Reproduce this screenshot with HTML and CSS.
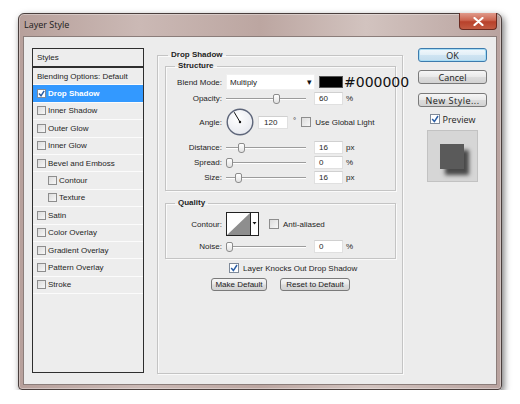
FILE: index.html
```html
<!DOCTYPE html>
<html>
<head>
	<meta charset="UTF-8">
	<title>Layer Style</title>
	<link rel="stylesheet" href="styles.css">
</head>
<body>
<div class="window">
	<div class="titlebar">
		<span class="title">Layer Style</span>
		<span class="close">
			<svg width="11" height="9" viewBox="0 0 11 9"><path d="M1.5 1 L9.5 8 M9.5 1 L1.5 8" stroke="#fff" stroke-width="2.2" stroke-linecap="round"/></svg>
		</span>
	</div>
	<div class="client">
		<div class="styles-list">
			<div class="list-head">Styles</div>
			<div class="item">Blending Options: Default</div>
			<div class="item selected"><span class="cb on"><svg width="7" height="7" viewBox="0 0 7 7"><path d="M1 3.5 L3 5.8 L6.2 0.8" fill="none" stroke="#2b5fa6" stroke-width="1.5"/></svg></span>Drop Shadow</div>
			<div class="item"><span class="cb"></span>Inner Shadow</div>
			<div class="item"><span class="cb"></span>Outer Glow</div>
			<div class="item"><span class="cb"></span>Inner Glow</div>
			<div class="item"><span class="cb"></span>Bevel and Emboss</div>
			<div class="item sub"><span class="cb"></span>Contour</div>
			<div class="item sub"><span class="cb"></span>Texture</div>
			<div class="item"><span class="cb"></span>Satin</div>
			<div class="item"><span class="cb"></span>Color Overlay</div>
			<div class="item"><span class="cb"></span>Gradient Overlay</div>
			<div class="item"><span class="cb"></span>Pattern Overlay</div>
			<div class="item"><span class="cb"></span>Stroke</div>
		</div>

		<fieldset class="group main-group">
			<legend>Drop Shadow</legend>
			<fieldset class="group structure">
				<legend>Structure</legend>
				<div class="row blend-row">
					<span class="lbl">Blend Mode:</span>
					<span class="select">Multiply<span class="arrow">&#9662;</span></span>
					<span class="swatch"></span>
					<span class="hex">#000000</span>
				</div>
				<div class="row opacity-row">
					<span class="lbl">Opacity:</span>
					<span class="slider"><span class="thumb" style="margin-left:47px"></span></span>
					<span class="field">60</span><span class="unit">%</span>
				</div>
				<div class="row angle-row">
					<span class="lbl">Angle:</span>
					<svg class="dial" width="28" height="28" viewBox="0 0 28 28">
						<defs><radialGradient id="dg" cx="0.4" cy="0.35" r="0.7"><stop offset="0" stop-color="#ffffff"/><stop offset="1" stop-color="#e6e8ee"/></radialGradient></defs>
						<circle cx="14" cy="14" r="12.8" fill="url(#dg)" stroke="#5d6579" stroke-width="1.4"/>
						<line x1="14" y1="14" x2="8.2" y2="4.2" stroke="#111" stroke-width="1"/>
						<circle cx="14" cy="14" r="1.2" fill="#111"/>
					</svg>
					<span class="field wide">120</span>
					<span class="deg">&deg;</span>
					<span class="cb big"></span>
					<span class="cb-text">Use Global Light</span>
				</div>
				<div class="row first-slider">
					<span class="lbl">Distance:</span>
					<span class="slider"><span class="thumb" style="margin-left:12px"></span></span>
					<span class="field">16</span><span class="unit">px</span>
				</div>
				<div class="row">
					<span class="lbl">Spread:</span>
					<span class="slider"><span class="thumb" style="margin-left:0"></span></span>
					<span class="field">0</span><span class="unit">%</span>
				</div>
				<div class="row">
					<span class="lbl">Size:</span>
					<span class="slider"><span class="thumb" style="margin-left:9px"></span></span>
					<span class="field">16</span><span class="unit">px</span>
				</div>
			</fieldset>

			<fieldset class="group quality">
				<legend>Quality</legend>
				<div class="row contour-row">
					<span class="lbl">Contour:</span>
					<span class="contour">
						<svg width="33" height="24" viewBox="0 0 33 24">
							<rect x="0.5" y="0.5" width="24" height="23" fill="#fff" stroke="#222"/>
							<polygon points="1,23 24,1 24,23" fill="#8e8e8e"/>
							<rect x="24.5" y="0.5" width="8" height="23" fill="#fff" stroke="#222"/>
							<polygon points="26.5,10 30.5,10 28.5,12.5" fill="#111"/>
						</svg>
					</span>
					<span class="cb big anti"></span>
					<span class="cb-text">Anti-aliased</span>
				</div>
				<div class="row noise-row">
					<span class="lbl">Noise:</span>
					<span class="slider"><span class="thumb" style="margin-left:0"></span></span>
					<span class="field">0</span><span class="unit">%</span>
				</div>
			</fieldset>

			<div class="knock-row">
				<span class="cb big on"><svg width="8" height="8" viewBox="0 0 8 8"><path d="M1.2 4 L3.4 6.6 L7 1" fill="none" stroke="#2b5fa6" stroke-width="1.5"/></svg></span>
				<span class="cb-text">Layer Knocks Out Drop Shadow</span>
			</div>
			<div class="default-row">
				<span class="btn small make">Make Default</span>
				<span class="btn small reset">Reset to Default</span>
			</div>
		</fieldset>

		<div class="side">
			<span class="btn ok">OK</span>
			<span class="btn cancel">Cancel</span>
			<span class="btn newstyle">New Style...</span>
			<div class="preview-row">
				<span class="cb big on"><svg width="8" height="8" viewBox="0 0 8 8"><path d="M1.2 4 L3.4 6.6 L7 1" fill="none" stroke="#2b5fa6" stroke-width="1.5"/></svg></span>
				<span>Preview</span>
			</div>
			<div class="preview">
				<div class="preview-square"></div>
			</div>
		</div>
	</div>
</div>
</body>
</html>
```

FILE: styles.css
```css
*{
	box-sizing: border-box;
}
body{
	margin: 0;
	padding: 13px 0 0 18px;
	background: #fff;
	font-family: "Liberation Sans", Arial, sans-serif;
	font-size: 8px;
	color: #1e1e1e;
}
.window{
	width: 484px;
	height: 377px;
	border: 1px solid #4a3f3d;
	border-radius: 6px 6px 4px 4px;
	background: linear-gradient(90deg, #b7a09b 0%, #cbb9b5 25%, #bca6a1 50%, #d2c3bf 72%, #b9a39f 100%);
	box-shadow: 2px 3px 7px rgba(0,0,0,0.55), inset 0 0 0 1px rgba(255,255,255,0.35);
	display: flex;
	flex-direction: column;
}
.titlebar{
	height: 22px;
	display: flex;
	justify-content: space-between;
	align-items: flex-start;
}
.title{
	font-family: "Open Sans", "Liberation Sans", sans-serif;
	font-size: 9px;
	line-height: 12px;
	padding: 5px 0 0 5px;
	color: #1a1a1a;
}
.close{
	width: 38px;
	height: 17px;
	margin: -1px 4px 0 0;
	border: 1px solid #6a2a20;
	border-top: none;
	border-radius: 0 0 4px 4px;
	background: linear-gradient(#e09a8b, #cc6550 45%, #b8412b 55%, #c25a42);
	display: flex;
	align-items: center;
	justify-content: center;
}
.client{
	flex: 1;
	margin: 0 4px 4px;
	border: 1px solid #8b7d7a;
	background: #ececec;
	display: flex;
	align-items: flex-start;
	padding: 11px 0 0 8px;
}

/* styles list */
.styles-list{
	width: 112px;
	height: 325px;
	flex: none;
	border: 1px solid #2e2e2e;
	background: #ededed;
}
.list-head{
	height: 19px;
	line-height: 17px;
	padding-left: 4px;
	border-bottom: 2px solid #2e2e2e;
}
.item{
	height: 17.4px;
	border-bottom: 1px solid #fbfbfb;
	display: flex;
	align-items: center;
	padding-left: 4px;
	white-space: nowrap;
}
.item.sub{
	padding-left: 15px;
}
.item.selected{
	background: #3399ff;
	color: #fff;
	font-weight: bold;
}
.cb{
	width: 9px;
	height: 9px;
	flex: none;
	margin-right: 2px;
	border: 1px solid #8d8d8d;
	background: linear-gradient(135deg, #dcdcdc, #f7f7f7);
	display: inline-flex;
	align-items: center;
	justify-content: center;
}
.cb.on{
	background: #fff;
	border-color: #7f8a99;
}
.cb.big{
	width: 10px;
	height: 10px;
}

/* groups */
.group{
	margin: 0;
	min-width: 0;
	border: 1px solid #c4c4c4;
	box-shadow: 1px 1px 0 #fafafa, inset 1px 1px 0 #fafafa;
}
legend{
	padding: 0 3px;
	font-weight: bold;
	line-height: 10px;
}
.main-group{
	width: 246px;
	height: 324px;
	flex: none;
	margin: 2px 0 0 13px;
	padding: 1px 6px 0 7px;
}
.main-group > legend{
	margin-left: 3px;
}
.structure{
	padding: 0 0 5px 0;
}
.structure > legend, .quality > legend{
	margin-left: 9px;
}
.quality{
	margin-top: 7px;
	padding: 0 0 4px 0;
}
.row{
	display: flex;
	align-items: center;
	height: 15px;
	white-space: nowrap;
}
.lbl{
	width: 56px;
	flex: none;
	text-align: right;
	margin-right: 4px;
}
.blend-row{
	height: 16px;
	margin-top: 3px;
}
.opacity-row{
	margin-top: 1px;
}
.angle-row{
	height: 30px;
	margin-top: 1px;
}
.first-slider{
	margin-top: 3px;
}
.select{
	width: 89px;
	height: 16px;
	flex: none;
	background: #fff;
	border: 1px solid #f0f0f0;
	display: flex;
	align-items: center;
	justify-content: space-between;
	padding: 0 2px 0 3px;
}
.arrow{
	font-size: 9px;
	color: #111;
}
.swatch{
	width: 24px;
	height: 12px;
	flex: none;
	margin-left: 4px;
	background: #000;
	border: 1px solid #555;
}
.hex{
	font-family: "DejaVu Sans", sans-serif;
	font-size: 14px;
	margin-left: 1px;
	color: #111;
}
.slider{
	width: 80px;
	height: 10px;
	flex: none;
	margin-right: 8px;
	display: flex;
	align-items: center;
	background: linear-gradient(#9c9c9c, #9c9c9c) 0 4px / 100% 1px no-repeat,
		linear-gradient(#fff, #fff) 0 5px / 100% 1px no-repeat;
}
.thumb{
	width: 7px;
	height: 10px;
	flex: none;
	border: 1px solid #8c8c8c;
	border-radius: 2px 2px 3px 3px;
	background: linear-gradient(#ffffff, #e2e2e2);
}
.field{
	width: 29px;
	height: 13px;
	flex: none;
	background: #fff;
	border: 1px solid #e0e0e0;
	border-top-color: #d0d0d0;
	padding-left: 4px;
	line-height: 11px;
}
.field.wide{
	width: 30px;
	margin-left: 4px;
	padding-left: 5px;
}
.unit{
	margin-left: 3px;
}
.dial{
	flex: none;
}
.deg{
	margin: -3px 5px 0 5px;
}
.cb-text{
	margin-left: 2px;
}
.contour-row{
	height: 24px;
	margin-top: 4px;
}
.contour{
	width: 33px;
	height: 24px;
	flex: none;
	display: flex;
}
.anti{
	margin-left: 10px;
}
.noise-row{
	margin-top: 3px;
}
.knock-row{
	height: 12px;
	margin-top: 3px;
	padding-left: 64px;
	display: flex;
	align-items: center;
}
.default-row{
	margin-top: 4px;
	display: flex;
	justify-content: center;
	gap: 13px;
}

/* buttons */
.btn{
	display: flex;
	align-items: center;
	justify-content: center;
	height: 14px;
	border: 1px solid #7a7a7a;
	border-radius: 3px;
	background: linear-gradient(#f6f6f6, #e9e9e9 48%, #dcdcdc 52%, #d2d2d2);
	color: #1a1a1a;
	white-space: nowrap;
}
.btn.small{
	height: 13px;
}
.make{
	width: 56px;
}
.reset{
	width: 70px;
}
.side{
	width: 69px;
	flex: none;
	margin-left: 15px;
	display: flex;
	flex-direction: column;
	align-items: center;
	font-family: "Open Sans", "Liberation Sans", sans-serif;
	font-size: 9px;
}
.side .btn{
	width: 69px;
}
.ok{
	border-color: #3d7bad;
	box-shadow: inset 0 0 0 1px #a6dcf5;
	background: linear-gradient(#f2f8fc, #e3eff7 48%, #cfe4f2 52%, #c4ddee);
}
.cancel{
	margin-top: 8px;
}
.newstyle{
	margin-top: 9px;
	letter-spacing: 0.5px;
}
.preview-row{
	margin-top: 7px;
	height: 10px;
	display: flex;
	align-items: center;
}
.preview-row .cb{
	margin-right: 3px;
}
.preview{
	width: 51px;
	height: 52px;
	margin-top: 6px;
	background: #d6d6d6;
	border: 1px solid #c2c2c2;
	padding: 13px 0 0 12px;
}
.preview-square{
	width: 24px;
	height: 25px;
	background: #5a5a5a;
	box-shadow: 5px 6px 4px rgba(25,25,25,0.75);
}
```
